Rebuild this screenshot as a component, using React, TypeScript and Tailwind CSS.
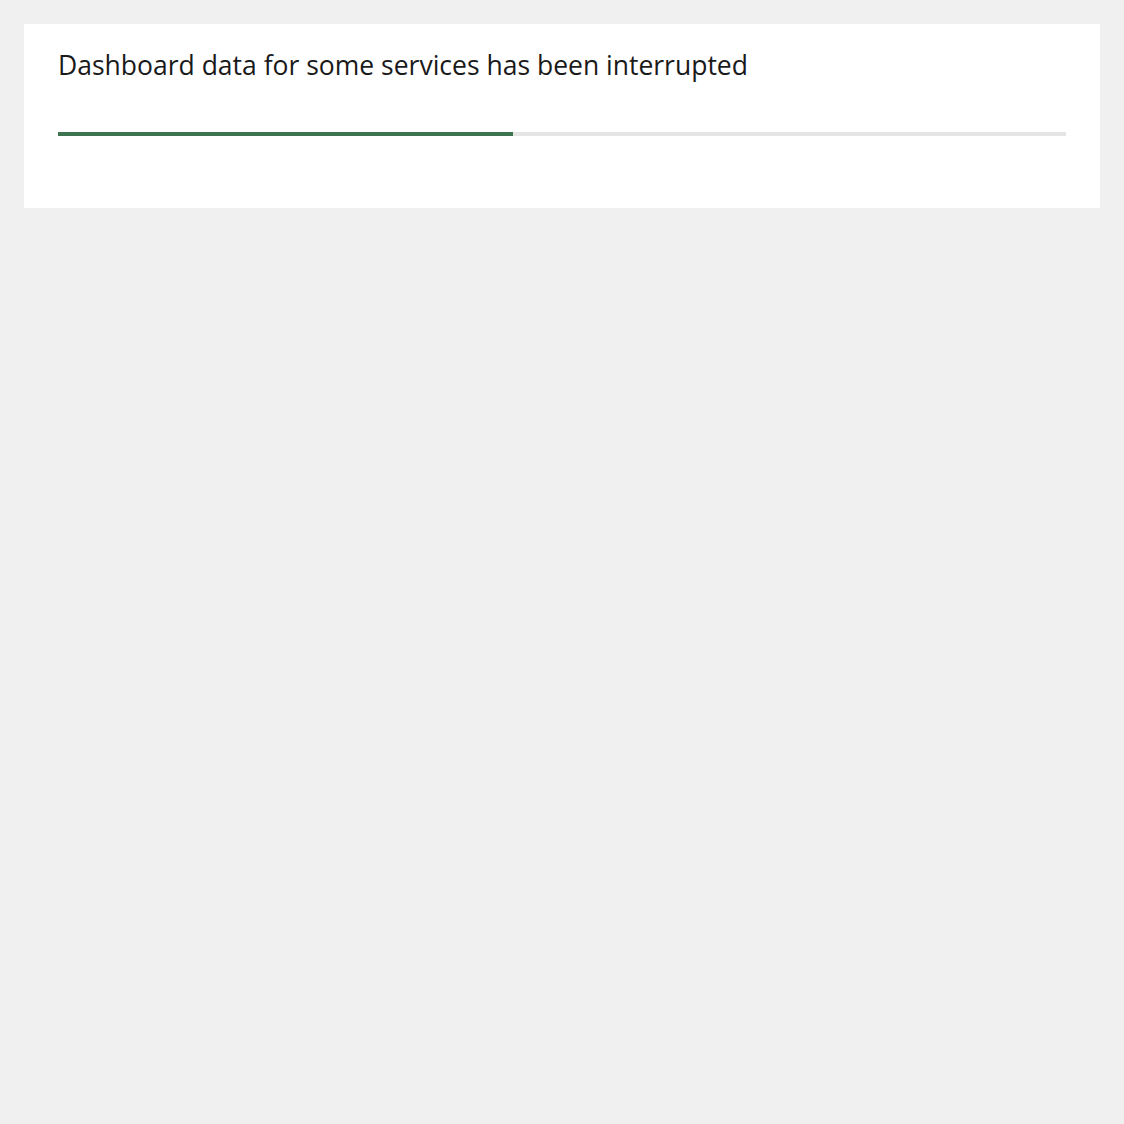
export default function App() {
  return (
    <div className="min-h-[1124px] bg-[#f0f0f0] p-6">
      <div className="bg-white px-[34px] pt-[21px] pb-[72px]">
        <h1 className="text-[26.5px] leading-[40px] text-[#1a1a1a] font-normal" style={{ fontFamily: '"Open Sans", sans-serif' }}>
          Dashboard data for some services has been interrupted
        </h1>
        <div className="mt-[47px] h-1 bg-[#e5e5e5] flex">
          <div className="h-1 bg-[#3e7350] w-[455px]" />
        </div>
      </div>
    </div>
  );
}
